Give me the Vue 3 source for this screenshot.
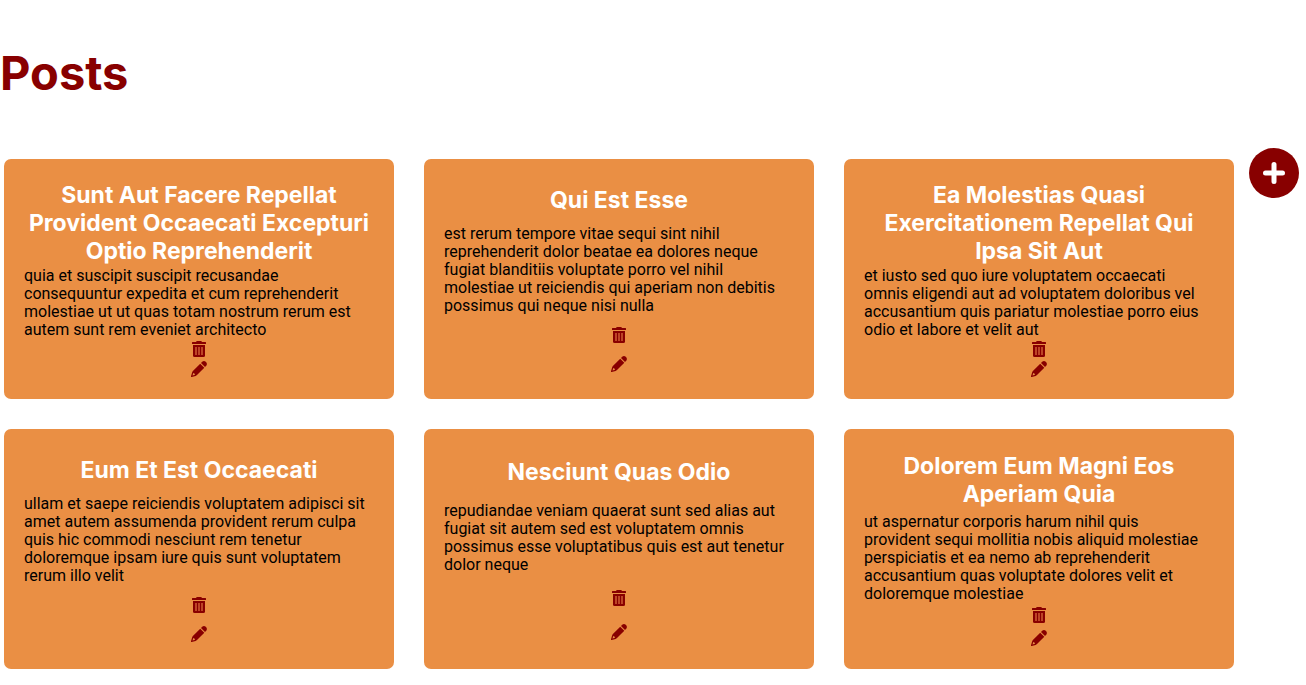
<script setup>
const posts = [
  { id: 1, title: 'Sunt Aut Facere Repellat Provident Occaecati Excepturi Optio Reprehenderit', body: 'quia et suscipit suscipit recusandae consequuntur expedita et cum reprehenderit molestiae ut ut quas totam nostrum rerum est autem sunt rem eveniet architecto' },
  { id: 2, title: 'Qui Est Esse', body: 'est rerum tempore vitae sequi sint nihil reprehenderit dolor beatae ea dolores neque fugiat blanditiis voluptate porro vel nihil molestiae ut reiciendis qui aperiam non debitis possimus qui neque nisi nulla' },
  { id: 3, title: 'Ea Molestias Quasi Exercitationem Repellat Qui Ipsa Sit Aut', body: 'et iusto sed quo iure voluptatem occaecati omnis eligendi aut ad voluptatem doloribus vel accusantium quis pariatur molestiae porro eius odio et labore et velit aut' },
  { id: 4, title: 'Eum Et Est Occaecati', body: 'ullam et saepe reiciendis voluptatem adipisci sit amet autem assumenda provident rerum culpa quis hic commodi nesciunt rem tenetur doloremque ipsam iure quis sunt voluptatem rerum illo velit' },
  { id: 5, title: 'Nesciunt Quas Odio', body: 'repudiandae veniam quaerat sunt sed alias aut fugiat sit autem sed est voluptatem omnis possimus esse voluptatibus quis est aut tenetur dolor neque' },
  { id: 6, title: 'Dolorem Eum Magni Eos Aperiam Quia', body: 'ut aspernatur corporis harum nihil quis provident sequi mollitia nobis aliquid molestiae perspiciatis et ea nemo ab reprehenderit accusantium quas voluptate dolores velit et doloremque molestiae' },
]
</script>

<template>
  <main class="page">
    <h1 class="heading">Posts</h1>
    <div class="content">
      <section class="posts" aria-label="Posts">
        <article v-for="post in posts" :key="post.id" class="card">
          <h2 class="title">{{ post.title }}</h2>
          <p class="body">{{ post.body }}</p>
          <button class="action" type="button" aria-label="Delete post">
            <svg viewBox="0 0 16 16" width="16" height="16" aria-hidden="true">
              <path d="M1 1.500Q1 1 1.500 1H5L5.500 .3Q5.700 0 6 0h4q.3 0 .5 .3L11 1h3.500q.5 0 .5 .5V3H1z" />
              <path d="M2 4h12v10.500q0 1.500-1.500 1.500h-9Q2 16 2 14.500z" />
              <path class="slats" d="M4 6h2v8H4zM7 6h2v8H7zM10 6h2v8h-2z" />
            </svg>
          </button>
          <button class="action" type="button" aria-label="Edit post">
            <svg viewBox="0 0 16 16" width="16" height="16" aria-hidden="true">
              <path d="M10 2L11.200 .8Q13-.7 15 1Q16.700 3 15.200 4.800L14 6z" />
              <path fill-rule="evenodd" d="M9.200 2.700L13.300 6.800L6 14.100Q5.400 14.700 4.600 14.900L.7 16Q-.2 16.200 0 15.300L1.100 11.400Q1.300 10.600 1.900 10zM2.300 12L1.500 14.500L4 13.700Q3.700 12.300 2.300 12z" />
            </svg>
          </button>
        </article>
      </section>
      <button class="add" type="button" aria-label="Add post">
        <svg viewBox="0 0 22 22" width="22" height="22" aria-hidden="true">
          <path d="M11 2.500v17M2.500 11h17" fill="none" stroke="currentColor" stroke-width="5" stroke-linecap="round" />
        </svg>
      </button>
    </div>
  </main>
</template>

<style>
body {
  margin: 0;
  background: #fff;
}
</style>

<style scoped>
.page {
  padding-top: 44px;
  font-family: Inter, "Liberation Sans", sans-serif;
}

.heading {
  margin: 0 0 47px;
  font-size: 47px;
  line-height: 57px;
  font-weight: 700;
  color: #880000;
}

.content {
  display: flex;
  align-items: flex-start;
  gap: 15px;
  padding: 0 7px 16px 4px;
}

.posts {
  flex: 1;
  display: grid;
  grid-template-columns: repeat(3, minmax(0, 1fr));
  gap: 30px;
  padding-top: 11px;
}

.card {
  box-sizing: border-box;
  min-height: 240px;
  padding: 21px 20px 19px;
  display: flex;
  flex-direction: column;
  justify-content: space-around;
  align-items: center;
  background: #ea8f44;
  border-radius: 7px;
}

.title {
  margin: 0;
  font-size: 23px;
  line-height: 28px;
  font-weight: 700;
  text-align: center;
  color: #fff;
}

.body {
  box-sizing: border-box;
  width: 100%;
  margin: 0;
  padding-right: 7px;
  font-family: Roboto, "Liberation Sans", sans-serif;
  font-size: 16px;
  line-height: 18px;
  color: #000;
}

.action {
  display: grid;
  place-items: start center;
  height: 18px;
  padding: 0;
  border: 0;
  background: none;
  color: #880000;
  cursor: pointer;
}

.action svg {
  display: block;
  fill: currentColor;
}

.action .slats {
  fill: #bd4526;
}

.add {
  flex: none;
  display: grid;
  place-items: center;
  width: 50px;
  height: 50px;
  padding: 0;
  border: 0;
  border-radius: 50%;
  background: #880000;
  color: #fff;
  cursor: pointer;
}
</style>
